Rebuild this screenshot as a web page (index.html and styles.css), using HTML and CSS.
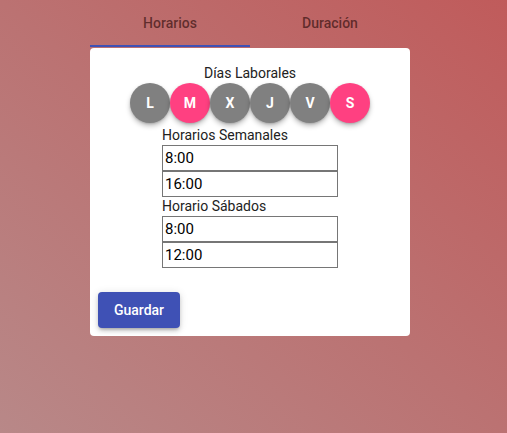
FILE: index.html
```html
<!DOCTYPE html>
<html lang="es">
<head>
<meta charset="utf-8">
<link rel="stylesheet" href="styles.css">
</head>
<body>
<div class="page">
  <div class="tabs">
    <div class="tab active">Horarios</div>
    <div class="tab">Duración</div>
  </div>
  <div class="card">
    <div class="title">Días Laborales</div>
    <div class="days">
      <span class="day">L</span>
      <span class="day on">M</span>
      <span class="day">X</span>
      <span class="day">J</span>
      <span class="day">V</span>
      <span class="day on">S</span>
    </div>
    <div class="form">
      <div class="label">Horarios Semanales</div>
      <input class="field" value="8:00">
      <input class="field" value="16:00">
      <div class="label">Horario Sábados</div>
      <input class="field" value="8:00">
      <input class="field" value="12:00">
    </div>
    <button class="save">Guardar</button>
  </div>
</div>
</body>
</html>
```
FILE: styles.css
```css
html, body {
  margin: 0;
  height: 100%;
}
body {
  background: linear-gradient(to top right, #b88888 0%, #bb7272 50%, #c05b5b 100%);
  font-family: Roboto, "Liberation Sans", sans-serif;
}
.page {
  width: 320px;
  margin-left: 90px;
}
.tabs {
  display: flex;
  height: 48px;
}
.tab {
  flex: 1;
  display: flex;
  align-items: center;
  justify-content: center;
  font-size: 14px;
  font-weight: 500;
  color: rgba(60, 20, 20, 0.72);
  box-sizing: border-box;
  padding-bottom: 2px;
}
.tab.active {
  border-bottom: 2px solid #3f51b5;
  height: 47px;
  padding-bottom: 0;
}
.card {
  background: #fff;
  border-radius: 4px;
  padding: 17px 8px 8px;
  box-sizing: border-box;
  height: 288px;
  display: flex;
  flex-direction: column;
}
.title {
  text-align: center;
  font-size: 14px;
  color: #222;
  line-height: 16px;
}
.days {
  display: flex;
  justify-content: center;
  margin-top: 2px;
}
.day {
  width: 40px;
  height: 40px;
  border-radius: 50%;
  background: #808080;
  color: #fff;
  font-weight: 700;
  font-size: 14px;
  display: flex;
  align-items: center;
  justify-content: center;
  box-shadow: 0 3px 5px rgba(0,0,0,0.25), 0 1px 2px rgba(0,0,0,0.15);
}
.day.on {
  background: #ff4081;
}
.form {
  width: 176px;
  margin: 3px auto 0;
  display: flex;
  flex-direction: column;
}
.label {
  font-size: 14px;
  color: #222;
  line-height: 19px;
}
.field {
  box-sizing: border-box;
  width: 176px;
  height: 26px;
  border: 1px solid #767676;
  border-radius: 0;
  padding: 0 2px;
  font-family: Roboto, "Liberation Sans", sans-serif;
  font-size: 15px;
  color: #000;
  outline: none;
  margin: 0;
}
.save {
  margin-top: auto;
  align-self: flex-start;
  width: 82px;
  height: 36px;
  border: none;
  border-radius: 4px;
  background: #3f51b5;
  color: #fff;
  font-family: Roboto, "Liberation Sans", sans-serif;
  font-size: 14px;
  font-weight: 500;
  box-shadow: 0 3px 3px -2px rgba(0,0,0,.2), 0 3px 4px rgba(0,0,0,.14), 0 1px 8px rgba(0,0,0,.12);
}
```
